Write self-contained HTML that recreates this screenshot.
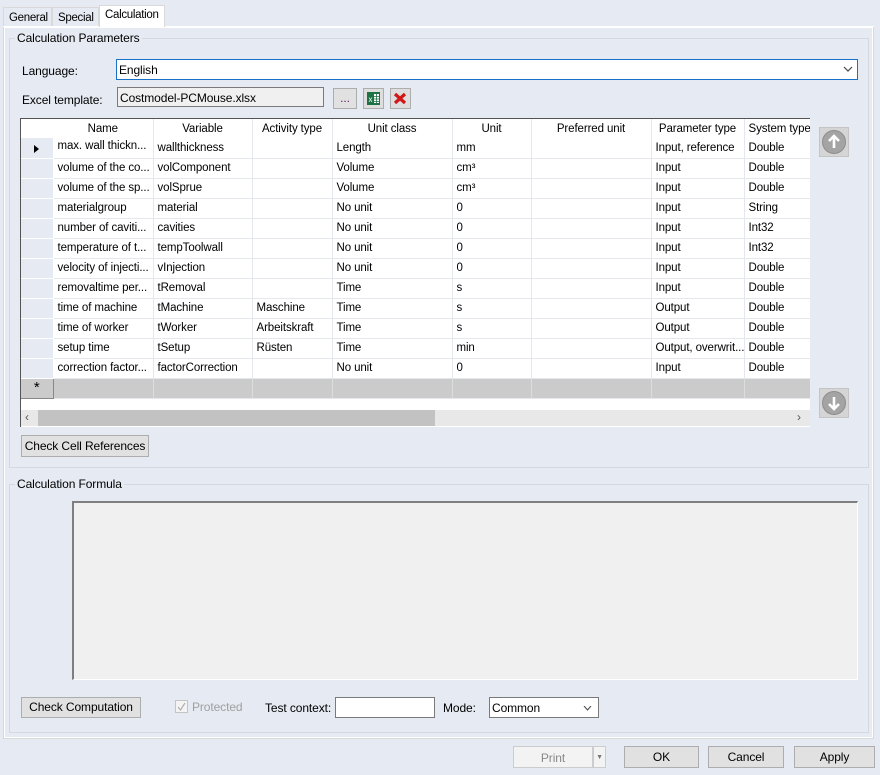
<!DOCTYPE html>
<html><head><meta charset="utf-8"><style>
*{box-sizing:border-box;margin:0;padding:0}
body{width:880px;height:775px;background:#e6eaf2;font-family:"Liberation Sans",sans-serif;font-size:12px;color:#000;position:relative;overflow:hidden;letter-spacing:-0.1px}
.a{position:absolute}
.btn{position:absolute;background:#e1e1e1;border:1px solid #adadad;text-align:center;font-size:12px}
.grp{position:absolute;border:1px solid #d5d8dd}
.gl{position:absolute;background:#e6eaf2;padding:0 2px;font-size:12px}
table{border-collapse:collapse;table-layout:fixed}
td{height:20px;border-right:1px solid #e4e7ec;border-bottom:1px solid #e4e7ec;padding:0 4px;white-space:nowrap;overflow:hidden;font-size:11.5px;background:#fff;line-height:14px}
td.rh{background:#e6eaf2;border-right:1px solid #fff;border-bottom:1px solid #fff;padding:0}
tr.h td{height:20px;text-align:center;padding-top:3px;vertical-align:top}
tr.n td{background:#cbcbcb;border-right:1px solid #ddd}
</style></head><body>
<div class="a" style="left:3px;top:7px;width:49px;height:19px;border:1px solid #d9d9d9;border-bottom:none;background:#e6eaf2;padding:4px 0 0 5px;font-size:11.5px;letter-spacing:-0.3px">General</div>
<div class="a" style="left:52px;top:7px;width:47px;height:19px;border:1px solid #d9d9d9;border-bottom:none;background:#e6eaf2;padding:4px 0 0 5px;font-size:11.5px;letter-spacing:-0.3px">Special</div>
<div class="a" style="left:99px;top:5px;width:66px;height:22px;border:1px solid #d9d9d9;border-bottom:none;background:#fff;padding:3px 0 0 5px;z-index:2;font-size:11.5px;letter-spacing:-0.3px">Calculation</div>
<div class="a" style="left:3px;top:26px;width:871px;height:713px;border:1px solid #d9d9d9;border-top-color:#fff;background:#e6eaf2;box-shadow:inset 0 0 0 1px #fff"></div>
<div class="a" style="left:3px;top:26px;width:871px;height:1px;background:#fff"></div>

<div class="grp" style="left:9px;top:38px;width:860px;height:430px"></div>
<div class="gl" style="left:15px;top:31px">Calculation Parameters</div>
<div class="a" style="left:22px;top:64px">Language:</div>
<div class="a" style="left:116px;top:59px;width:742px;height:21px;border:1px solid #1a72c8;background:#fff;padding:3px 0 0 2px">English
<svg style="position:absolute;right:4px;top:6px" width="10" height="6"><path d="M1 1L5 5L9 1" stroke="#444" fill="none" stroke-width="1.2"/></svg></div>
<div class="a" style="left:22px;top:93px">Excel template:</div>
<div class="a" style="left:117px;top:87px;width:207px;height:20px;border:1px solid #7a7a7a;background:#f0f0f0;padding:3px 0 0 2px">Costmodel-PCMouse.xlsx</div>
<div class="btn" style="left:333px;top:88px;width:24px;height:21px;color:#602060;line-height:19px">...</div>
<div class="btn" style="left:363px;top:88px;width:21px;height:21px;background:#dedede">
<svg width="19" height="19" viewBox="0 0 19 19"><rect x="3" y="3" width="13" height="13" fill="#1e7145"/><rect x="10" y="5" width="5" height="9" fill="#fff"/><path d="M10 7.5h5M10 10h5M10 12.5h5M12.5 5v9" stroke="#1e7145" stroke-width=".8"/><text x="4.5" y="13" font-size="8" fill="#fff" font-family="Liberation Sans">x</text></svg></div>
<div class="btn" style="left:390px;top:88px;width:21px;height:21px;background:#dedede">
<svg width="19" height="19" viewBox="0 0 19 19"><path d="M4 5L14 14M14 5L4 14" stroke="#d01818" stroke-width="3.2"/></svg></div>

<div class="a" style="left:20px;top:118px;width:790px;height:309px;background:#fff;border-top:1px solid #555;border-left:1px solid #555;overflow:hidden">
<table style="width:790px">
<colgroup><col style="width:32px"><col style="width:100px"><col style="width:99px"><col style="width:80px"><col style="width:120px"><col style="width:79px"><col style="width:120px"><col style="width:93px"><col style="width:67px"></colgroup>
<tr class="h"><td style="background:#fff;border:none"></td><td style="border-bottom:none">Name</td><td>Variable</td><td>Activity type</td><td>Unit class</td><td>Unit</td><td>Preferred unit</td><td>Parameter type</td><td>System type</td></tr>
</table>
<table style="width:790px;position:absolute;top:19px;left:0">
<colgroup><col style="width:32px"><col style="width:100px"><col style="width:99px"><col style="width:80px"><col style="width:120px"><col style="width:79px"><col style="width:120px"><col style="width:93px"><col style="width:67px"></colgroup>
<tr><td class="rh"><svg width="30" height="14" style="display:block;margin-top:3px"><path d="M13 3l5 4-5 4z" fill="#000"/></svg></td><td style="vertical-align:top;padding-top:1px">max. wall thickn...</td><td>wallthickness</td><td></td><td>Length</td><td>mm</td><td></td><td>Input, reference</td><td>Double</td></tr>
<tr><td class="rh"></td><td>volume of the co...</td><td>volComponent</td><td></td><td>Volume</td><td>cm³</td><td></td><td>Input</td><td>Double</td></tr>
<tr><td class="rh"></td><td>volume of the sp...</td><td>volSprue</td><td></td><td>Volume</td><td>cm³</td><td></td><td>Input</td><td>Double</td></tr>
<tr><td class="rh"></td><td>materialgroup</td><td>material</td><td></td><td>No unit</td><td>0</td><td></td><td>Input</td><td>String</td></tr>
<tr><td class="rh"></td><td>number of caviti...</td><td>cavities</td><td></td><td>No unit</td><td>0</td><td></td><td>Input</td><td>Int32</td></tr>
<tr><td class="rh"></td><td>temperature of t...</td><td>tempToolwall</td><td></td><td>No unit</td><td>0</td><td></td><td>Input</td><td>Int32</td></tr>
<tr><td class="rh"></td><td>velocity of injecti...</td><td>vInjection</td><td></td><td>No unit</td><td>0</td><td></td><td>Input</td><td>Double</td></tr>
<tr><td class="rh"></td><td>removaltime per...</td><td>tRemoval</td><td></td><td>Time</td><td>s</td><td></td><td>Input</td><td>Double</td></tr>
<tr><td class="rh"></td><td>time of machine</td><td>tMachine</td><td>Maschine</td><td>Time</td><td>s</td><td></td><td>Output</td><td>Double</td></tr>
<tr><td class="rh"></td><td>time of worker</td><td>tWorker</td><td>Arbeitskraft</td><td>Time</td><td>s</td><td></td><td>Output</td><td>Double</td></tr>
<tr><td class="rh"></td><td>setup time</td><td>tSetup</td><td>Rüsten</td><td>Time</td><td>min</td><td></td><td>Output, overwrit...</td><td>Double</td></tr>
<tr><td class="rh"></td><td>correction factor...</td><td>factorCorrection</td><td></td><td>No unit</td><td>0</td><td></td><td>Input</td><td>Double</td></tr>
<tr class="n"><td class="rh" style="text-align:center;font-size:15px;border-right:1px solid #888;border-bottom:1px solid #888">*</td><td></td><td></td><td></td><td></td><td></td><td></td><td></td><td></td></tr>
</table>
<div class="a" style="left:0;top:291px;width:790px;height:16px;background:#e8e8e8"></div>
<div class="a" style="left:17px;top:291px;width:397px;height:16px;background:#c2c2c2"></div>
<div class="a" style="left:4px;top:291px;font-size:12px;color:#555">&lsaquo;</div>
<div class="a" style="left:776px;top:291px;font-size:12px;color:#555">&rsaquo;</div>
</div>
<div class="a" style="left:819px;top:127px;width:30px;height:30px;background:#d5d5d5;border:1px solid #c4c4c4">
<svg width="28" height="28"><circle cx="14" cy="14" r="11.5" fill="#a4a4a4" stroke="#8d8d8d"/><path d="M14 20V8M9 13l5-5 5 5" stroke="#fff" stroke-width="2.6" fill="none"/></svg></div>
<div class="a" style="left:819px;top:388px;width:30px;height:30px;background:#d5d5d5;border:1px solid #c4c4c4">
<svg width="28" height="28"><circle cx="14" cy="14" r="11.5" fill="#a4a4a4" stroke="#8d8d8d"/><path d="M14 8v12M9 15l5 5 5-5" stroke="#fff" stroke-width="2.6" fill="none"/></svg></div>
<div class="btn" style="left:21px;top:435px;width:128px;height:22px;line-height:20px">Check Cell References</div>

<div class="grp" style="left:9px;top:484px;width:860px;height:249px"></div>
<div class="gl" style="left:15px;top:477px">Calculation Formula</div>
<div class="a" style="left:72px;top:501px;width:786px;height:179px;background:#f0f0f0;border:1px solid #fff;border-top:2px solid #7f7f7f;border-left:2px solid #7f7f7f"></div>
<div class="btn" style="left:21px;top:697px;width:120px;height:21px;line-height:19px">Check Computation</div>
<div class="a" style="left:175px;top:700px;width:13px;height:13px;border:1px solid #c4c4c4;background:#f4f4f4"><svg width="11" height="11"><path d="M2 6l2.5 3L9 2" stroke="#b0b0b0" fill="none" stroke-width="1.2"/></svg></div>
<div class="a" style="left:192px;top:700px;color:#a0a0a0">Protected</div>
<div class="a" style="left:265px;top:701px">Test context:</div>
<div class="a" style="left:335px;top:697px;width:100px;height:21px;border:1px solid #7a7a7a;background:#fff"></div>
<div class="a" style="left:443px;top:701px">Mode:</div>
<div class="a" style="left:489px;top:697px;width:110px;height:21px;border:1px solid #7a7a7a;background:#fff;padding:3px 0 0 2px">Common
<svg style="position:absolute;right:6px;top:8px" width="9" height="5"><path d="M1 0L4.5 4L8 0" stroke="#444" fill="none"/></svg></div>

<div class="btn" style="left:513px;top:746px;width:80px;height:22px;line-height:22px;background:#f3f3f3;border-color:#ccc;color:#888">Print</div>
<div class="btn" style="left:593px;top:746px;width:13px;height:22px;background:#f3f3f3;border-color:#ccc;color:#777;font-size:7px;line-height:22px">▼</div>
<div class="btn" style="left:624px;top:746px;width:75px;height:22px;line-height:20px">OK</div>
<div class="btn" style="left:708px;top:746px;width:76px;height:22px;line-height:20px">Cancel</div>
<div class="btn" style="left:794px;top:746px;width:81px;height:22px;line-height:20px">Apply</div>
</body></html>
